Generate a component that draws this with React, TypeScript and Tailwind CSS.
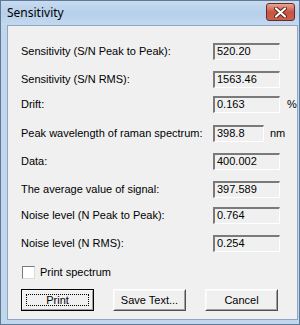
import React, { useState } from 'react';

const rows = [
  { label: 'Sensitivity (S/N Peak to Peak):', value: '520.20', mt: 'mt-[16px]' },
  { label: 'Sensitivity (S/N RMS):', value: '1563.46', mt: 'mt-[10px]' },
  { label: 'Drift:', value: '0.163', unit: '%', mt: 'mt-[7px]' },
  { label: 'Peak wavelength of raman spectrum:', value: '398.8', unit: 'nm', short: true, mt: 'mt-[11px]' },
  { label: 'Data:', value: '400.002', mt: 'mt-[10px]' },
  { label: 'The average value of signal:', value: '397.589', mt: 'mt-[10px]' },
  { label: 'Noise level (N Peak to Peak):', value: '0.764', mt: 'mt-[8px]' },
  { label: 'Noise level (N RMS):', value: '0.254', mt: 'mt-[10px]' },
];

function ReadBox({ value, short }: { value: string; short?: boolean }) {
  return (
    <div
      className={`h-[17px] ${short ? 'w-[51px]' : 'w-[67px]'} border-t-2 border-l-2 border-t-[#7a7a7a] border-l-[#7a7a7a] border-b border-r border-b-white border-r-white bg-[#f0f0f0] flex items-center pl-[2px] text-[11px] text-black leading-none`}
    >
      {value}
    </div>
  );
}

function WinButton({ children, focused }: { children: React.ReactNode; focused?: boolean }) {
  return (
    <button
      className={`h-[22px] w-[73px] bg-[#f0f0f0] flex items-center justify-center text-[11px] text-black ${
        focused ? 'border border-black' : 'border border-t-white border-l-white border-b-[#505050] border-r-[#505050]'
      }`}
    >
      <div className="w-full h-full border border-t-[#f8f8f8] border-l-[#f8f8f8] border-b-[#a0a0a0] border-r-[#a0a0a0] flex items-center justify-center">
        <div className={`${focused ? 'border border-dotted border-black' : 'border border-transparent'} w-[calc(100%-6px)] h-[calc(100%-6px)] flex items-center justify-center`}>
          {children}
        </div>
      </div>
    </button>
  );
}

export default function App() {
  const [printSpectrum, setPrintSpectrum] = useState(false);

  return (
    <div
      className="w-[300px] h-[325px] flex flex-col bg-[#c2d6ec] border border-[#5d7a9b]"
      style={{ fontFamily: '"Liberation Sans", Arial, sans-serif' }}
    >
      {/* Title bar */}
      <div className="h-[24px] shrink-0 flex items-center justify-between pl-[6px] pr-[4px] bg-gradient-to-b from-[#c8dbf0] via-[#b6cfea] to-[#c4d9f0]">
        <span className="text-[12px] text-black" style={{ fontFamily: '"Noto Sans", "Open Sans", sans-serif' }}>
          Sensitivity
        </span>
        <div className="w-[29px] h-[18px] -mt-[2px] rounded-[3px] border border-[#6b2a22] bg-gradient-to-b from-[#e8a593] via-[#c75542] to-[#c9604c] flex items-center justify-center">
          <svg width="13" height="11" viewBox="0 0 13 11">
            <path d="M2 1.5 L11 9.5 M11 1.5 L2 9.5" stroke="#5a2118" strokeWidth="4" strokeLinecap="round" />
            <path d="M2 1.5 L11 9.5 M11 1.5 L2 9.5" stroke="#ffffff" strokeWidth="2.2" strokeLinecap="round" />
          </svg>
        </div>
      </div>

      {/* Client area */}
      <div className="flex-1 px-[6px] pb-[4px] flex">
        <div className="flex-1 bg-[#f0f0f0] border border-[#8ea6c2] flex flex-col pl-[13px]">
          {rows.map((r) => (
            <div key={r.label} className={`${r.mt} h-[18px] flex items-center text-[11px] text-black`}>
              <span className="w-[192px] shrink-0">{r.label}</span>
              <ReadBox value={r.value} short={r.short} />
              {r.unit && <span className={r.short ? 'ml-[6px]' : 'ml-[7px]'}>{r.unit}</span>}
            </div>
          ))}

          <label className="mt-[14px] h-[13px] flex items-center gap-[5px] text-[11px] text-black ml-[1px]">
            <span
              onClick={() => setPrintSpectrum(!printSpectrum)}
              className="w-[13px] h-[13px] bg-white border border-t-[#7a7a7a] border-l-[#7a7a7a] border-b-[#dcdcdc] border-r-[#dcdcdc] flex items-center justify-center text-[10px] leading-none"
            >
              {printSpectrum ? '✓' : ''}
            </span>
            Print spectrum
          </label>

          <div className="mt-[10px] flex gap-[19px]">
            <WinButton focused>Print</WinButton>
            <WinButton>Save Text...</WinButton>
            <WinButton>Cancel</WinButton>
          </div>
        </div>
      </div>
    </div>
  );
}
